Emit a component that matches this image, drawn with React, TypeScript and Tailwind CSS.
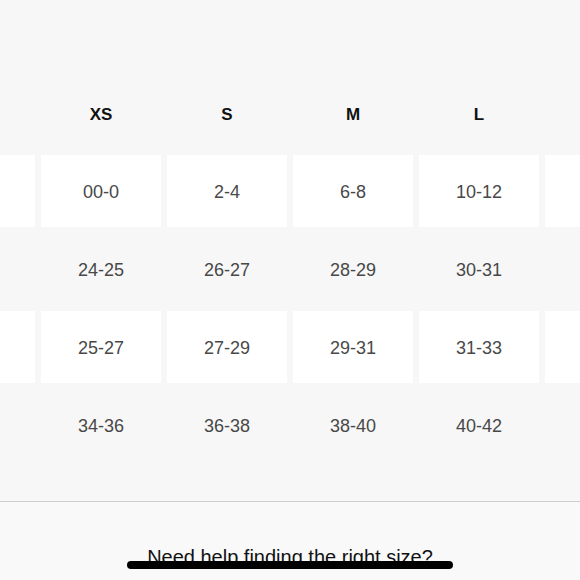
const headers = ["", "XS", "S", "M", "L", ""];

const rows = [
  { filled: true, values: ["", "00-0", "2-4", "6-8", "10-12", ""] },
  { filled: false, values: ["", "24-25", "26-27", "28-29", "30-31", ""] },
  { filled: true, values: ["", "25-27", "27-29", "29-31", "31-33", ""] },
  { filled: false, values: ["", "34-36", "36-38", "38-40", "40-42", ""] },
];

function SizeTable() {
  return (
    <div className="ml-[-85px] w-[750px]">
      <div className="mt-[79px] grid h-[72px] grid-cols-[repeat(6,120px)] gap-x-[6px]">
        {headers.map((h, i) => (
          <div
            key={i}
            className="flex items-center justify-center text-[17px] font-semibold text-[#111]"
          >
            {h}
          </div>
        ))}
      </div>
      <div className="mt-[4px] flex flex-col gap-[6px]">
        {rows.map((row, r) => (
          <div key={r} className="grid h-[72px] grid-cols-[repeat(6,120px)] gap-x-[6px]">
            {row.values.map((v, i) => (
              <div
                key={i}
                className={
                  row.filled
                    ? "flex items-center justify-center bg-white pt-[2px] text-[18px] text-[#484848]"
                    : "flex items-center justify-center pt-[2px] text-[18px] text-[#484848]"
                }
              >
                {v}
              </div>
            ))}
          </div>
        ))}
      </div>
    </div>
  );
}

export default function App() {
  return (
    <div className="relative h-[580px] w-[580px] overflow-hidden bg-[#f7f7f7] font-['Liberation_Sans',Arial,sans-serif]">
      <SizeTable />
      <div className="mt-[40px] h-px bg-[#cfcfcf]" />
      <div className="h-[120px] bg-[#f9f9f9] pt-[45px] text-center text-[20px] leading-none text-[#111]">
        Need help finding the right size?
      </div>
      <div className="absolute left-[127px] top-[561px] h-[8px] w-[326px] rounded-full bg-black" />
    </div>
  );
}
